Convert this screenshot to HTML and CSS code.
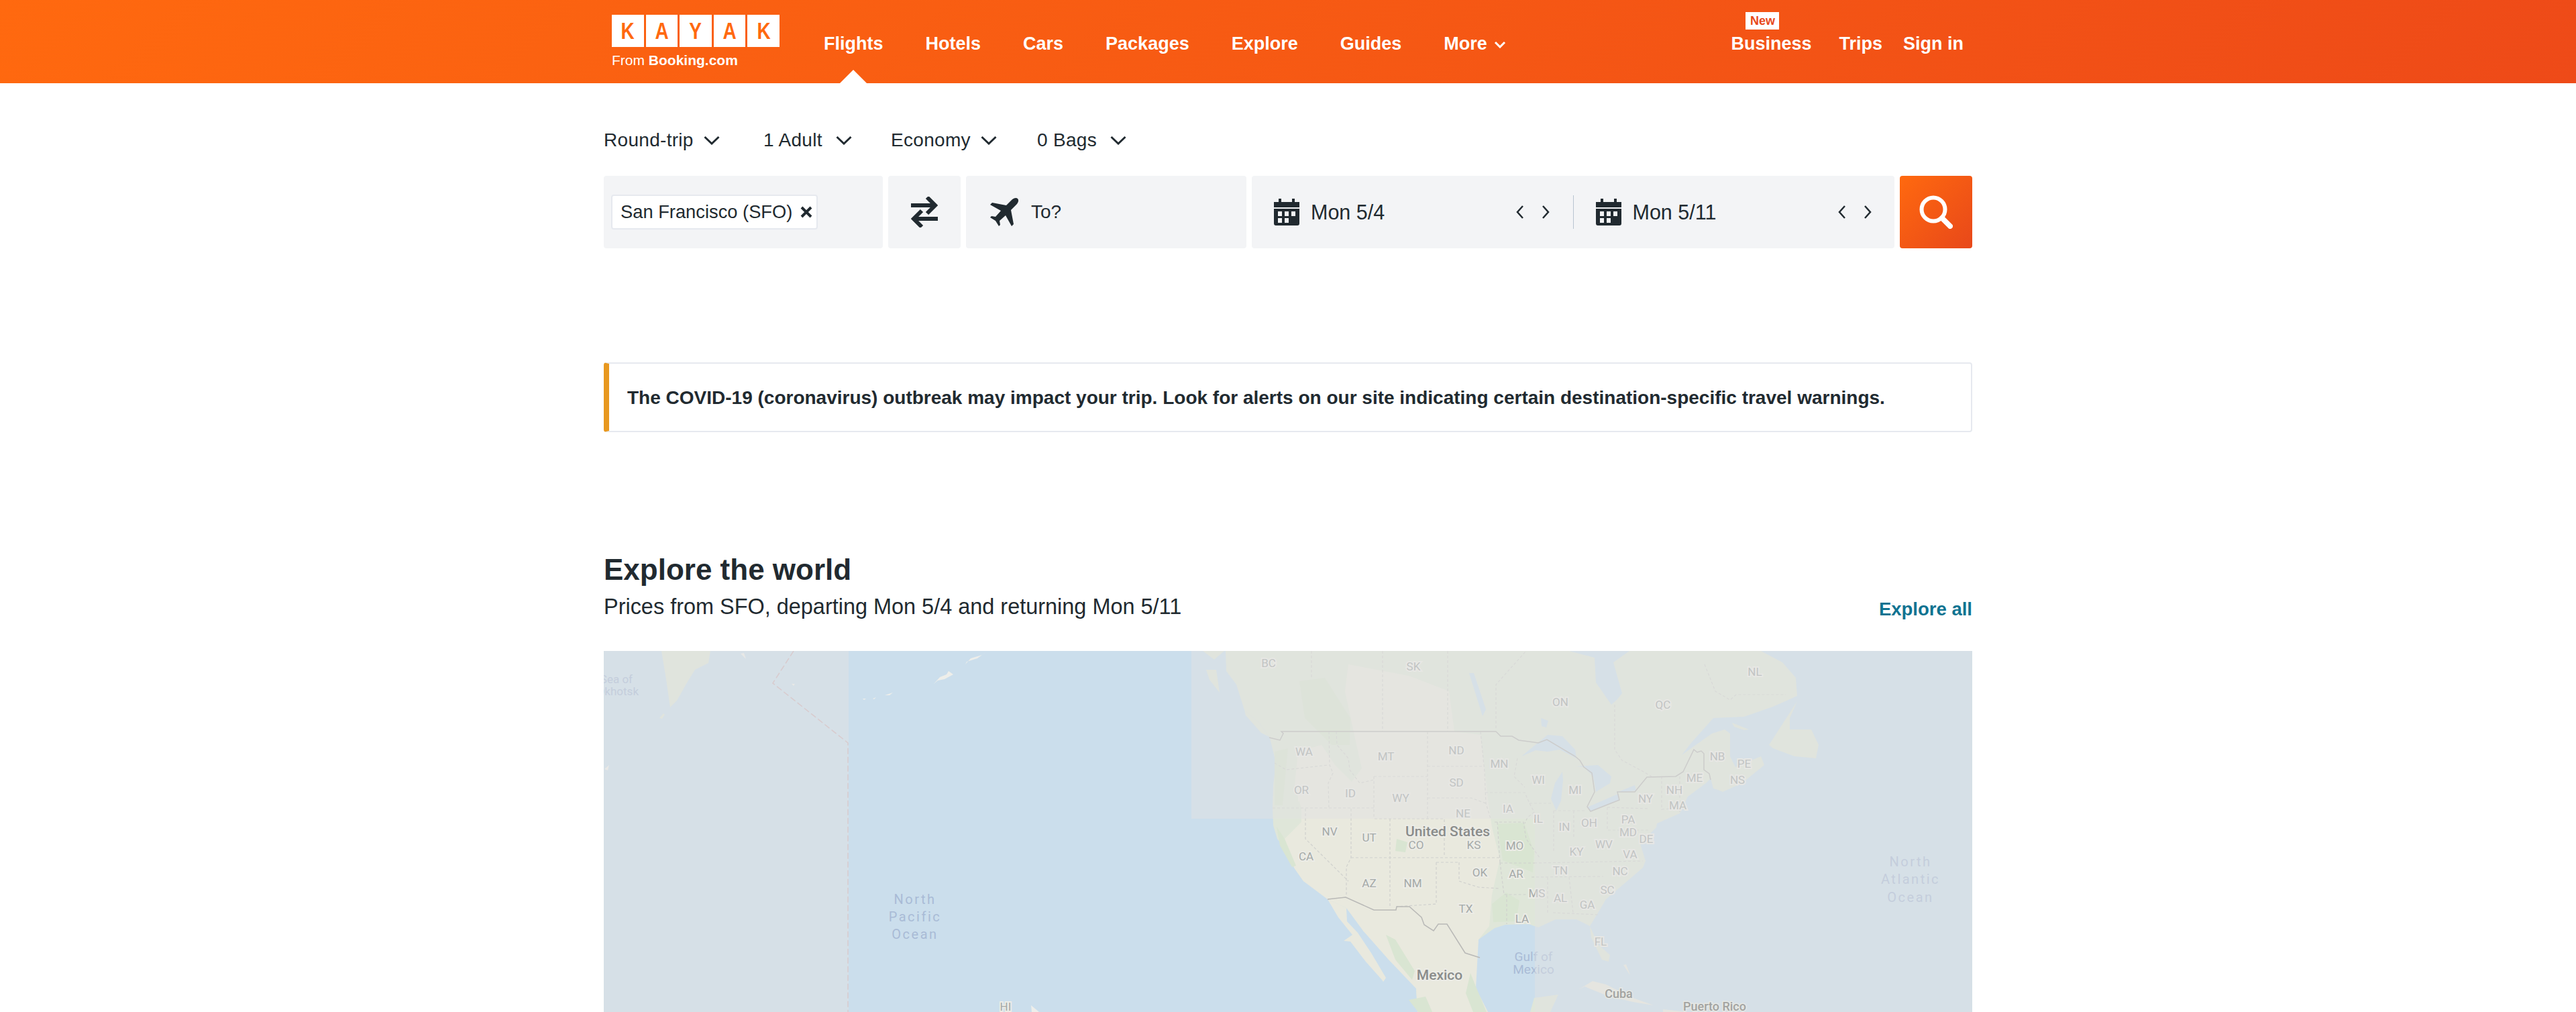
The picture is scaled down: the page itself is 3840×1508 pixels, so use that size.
FILE: index.html
```html
<!DOCTYPE html>
<html lang="en">
<head>
  <meta charset="UTF-8" />
  <title>KAYAK Flights</title>
  <link rel="stylesheet" href="styles.css">
</head>
<body>
  <header class="topbar">
    <div class="topbar-inner">
      <a class="logo">
        <div class="logo-tiles">
          <span class="tile"><b>K</b></span>
          <span class="tile"><b>A</b></span>
          <span class="tile"><b>Y</b></span>
          <span class="tile"><b>A</b></span>
          <span class="tile"><b>K</b></span>
        </div>
        <div class="logo-from">From <b>Booking.com</b></div>
      </a>
      <nav class="nav-main">
        <a class="nav-link active">Flights</a>
        <a class="nav-link">Hotels</a>
        <a class="nav-link">Cars</a>
        <a class="nav-link">Packages</a>
        <a class="nav-link">Explore</a>
        <a class="nav-link">Guides</a>
        <a class="nav-link">More<svg class="nav-chev" viewBox="0 0 18 11"><path d="M2 2l7 7 7-7" /></svg></a>
      </nav>
      <nav class="nav-right">
        <a class="nav-link nav-business">Business<span class="badge-new">New</span></a>
        <a class="nav-link nav-trips">Trips</a>
        <a class="nav-link">Sign in</a>
      </nav>
    </div>
  </header>

  <main class="page">
    <div class="options">
      <button class="option option-trip">Round-trip<svg class="chev" viewBox="0 0 24 14"><path d="M1.5 2L12 12 22.5 2" /></svg></button>
      <button class="option option-adult">1 Adult<svg class="chev" viewBox="0 0 24 14"><path d="M1.5 2L12 12 22.5 2" /></svg></button>
      <button class="option option-cabin">Economy<svg class="chev" viewBox="0 0 24 14"><path d="M1.5 2L12 12 22.5 2" /></svg></button>
      <button class="option option-bags">0 Bags<svg class="chev" viewBox="0 0 24 14"><path d="M1.5 2L12 12 22.5 2" /></svg></button>
    </div>

    <div class="search">
      <div class="field field-origin">
        <span class="chip">San Francisco (SFO)<svg class="chip-x" viewBox="0 0 18 18"><path d="M2 2l14 14M16 2L2 16" /></svg></span>
      </div>
      <div class="field field-swap">
        <svg class="swap-icon" viewBox="0 0 46 46">
          <path d="M3 13h35M27 1l12 12-12 12" />
          <path d="M43 33H8M19 21L7 33l12 12" />
        </svg>
      </div>
      <div class="field field-dest">
        <svg class="plane-icon" viewBox="0 0 44 44">
          <path d="M43 2c-2-2-6-1-9 2l-8 8L5 8 2 11l16 9-8 9-6-1-2 2 8 5 5 8 2-2-1-6 9-8 9 16 3-3-4-21 8-8c3-3 4-7 2-9z" />
        </svg>
        <span class="dest-text">To?</span>
      </div>
      <div class="field field-dates">
        <div class="date date-depart">
          <svg class="cal-icon" viewBox="0 0 38 40">
            <path d="M7 0h4v5H7zM27 0h4v5h-4zM0 5h38v8H0zM0 15h38v22a3 3 0 0 1-3 3H3a3 3 0 0 1-3-3zM6 19v7h6v-7zm10 0v7h6v-7zm10 0v7h6v-7zM6 29v7h6v-7zm10 0v7h6v-7z" fill-rule="evenodd" />
          </svg>
          <span class="date-text">Mon 5/4</span>
          <svg class="step-icon" viewBox="0 0 12 20"><path d="M10 1L2 10l8 9" /></svg>
          <svg class="step-icon" viewBox="0 0 12 20"><path d="M2 1l8 9-8 9" /></svg>
        </div>
        <div class="date-sep"></div>
        <div class="date date-return">
          <svg class="cal-icon" viewBox="0 0 38 40">
            <path d="M7 0h4v5H7zM27 0h4v5h-4zM0 5h38v8H0zM0 15h38v22a3 3 0 0 1-3 3H3a3 3 0 0 1-3-3zM6 19v7h6v-7zm10 0v7h6v-7zm10 0v7h6v-7zM6 29v7h6v-7zm10 0v7h6v-7z" fill-rule="evenodd" />
          </svg>
          <span class="date-text">Mon 5/11</span>
          <svg class="step-icon" viewBox="0 0 12 20"><path d="M10 1L2 10l8 9" /></svg>
          <svg class="step-icon" viewBox="0 0 12 20"><path d="M2 1l8 9-8 9" /></svg>
        </div>
      </div>
      <button class="search-btn">
        <svg class="search-icon" viewBox="0 0 50 50">
          <circle cx="21" cy="21" r="17.5" />
          <path class="handle" d="M34 34l12 12" />
        </svg>
      </button>
    </div>

    <div class="alert">The COVID-19 (coronavirus) outbreak may impact your trip. Look for alerts on our site indicating certain destination-specific travel warnings.</div>

    <section class="explore">
      <div class="explore-head">
        <div>
          <h2 class="explore-title">Explore the world</h2>
          <p class="explore-sub">Prices from SFO, departing Mon 5/4 and returning Mon 5/11</p>
        </div>
        <a class="explore-all">Explore all</a>
      </div>

      <div class="map">
        <svg class="map-svg" viewBox="0 0 2040 538" width="2040" height="538">
          <!-- far side of the pacific -->
          <path class="land" d="M86 0L159 0 156 18 136 28 123 49 109 74 99 84 93 42Z" />
          <path class="land" d="M83 100L89 93 91 95 87 101Z" />
          <path class="isle" d="M204 4L209 3 212 12ZM280 49L285 49 283 52ZM1 176L8 170 6 178Z" />
          <path class="isle" d="M539 20L547 11 564 6 572 0 557 11 541 16Z" />
          <path class="isle" d="M492 49L501 39 511 35 514 30 521 35 508 42 498 44Z" />
          <path class="isle" d="M419 66L431 62 426 66ZM401 71L406 69 403 72ZM386 71L391 71 388 73ZM637 528L649 538 638 538Z" />
          <path class="dateline" d="M283 0L252 48 364 137V538" />

          <!-- north america -->
          <path class="land" d="M927 0L928 30 943 50 955 88 977 107 992 128 993 130 1002 167 998 200 997 233 998 260 1004 280 1023 303 1029 323 1043 343 1065 353 1079 370 1107 383 1126 393 1132 417 1154 437 1170 460 1194 480 1211 503 1213 538 1318 538 1300 503 1300 463 1304 430 1328 413 1344 408 1379 407 1393 412 1419 400 1450 400 1470 410 1482 437 1500 453 1498 463 1488 460 1472 427 1470 410 1484 387 1494 370 1549 323 1553 313 1545 287 1569 263 1570 257 1604 242 1616 217 1643 197 1650 190 1654 205 1661 207 1668 210 1697 197 1730 170 1725 157 1687 173 1679 157 1679 123 1671 117 1652 123 1607 155 1621 137 1654 100 1700 98 1743 83 1779 67 1777 40 1757 17 1725 0 1529 0 1505 17 1518 63 1511 72 1502 80 1479 47 1477 10 1439 0Z" />
          <path class="land-warm" d="M1110 20L1200 37 1260 60 1268 120 1307 125 1318 220 1324 263 1336 310 1324 363 1320 410 1304 430 1300 503 1318 538 1213 538 1211 503 1170 460 1132 417 1107 383 1079 370 1043 343 1029 323 1023 303 1015 280 1040 255 1040 235 1030 200 1035 150 1070 140 1090 170 1115 195 1130 175 1120 130 1105 60Z" />
          <path class="land-dark" d="M1332 258L1372 256 1387 300 1385 330 1340 312ZM1324 377L1345 360 1365 372 1360 403 1326 404ZM1037 45L1075 40 1113 100 1112 140 1085 140 1045 100Z" />
          <path class="land-dark" d="M1166 423L1180 430 1209 477 1205 490 1180 460ZM1182 280L1198 285 1195 300 1180 298ZM1200 520L1225 515 1235 538 1214 538ZM1292 480L1300 500 1316 538 1296 538 1285 510Z" />
          <path class="land-dark" d="M1003 262L1015 280 1032 320 1026 322 1008 290ZM1000 150L1020 145 1012 230 1000 230Z" />
          <path class="land-warm" d="M1079 370L1095 397 1116 423 1103 432 1113 433 1136 463 1160 490 1162 493 1166 487 1144 450 1124 420 1108 403 1107 383Z" />
          <path class="land-warm" d="M1035 160L1060 170 1050 210 1035 225Z" />
          <path class="land" d="M898 28L913 28 918 62 903 43ZM893 0L910 13 925 0ZM955 88L977 107 992 128 980 122 957 96Z" />
          <path class="land" d="M1779 75L1737 140 1743 145 1775 157 1807 160 1811 140 1800 117 1768 117 1768 100Z" />
          <path class="land" d="M1682 107L1707 117 1700 118 1685 113Z" />
          <path class="land-warm" d="M1452 505L1474 492 1494 497 1534 517 1565 528 1534 523 1494 513 1462 500Z" />
          <path class="land-warm" d="M1520 468L1524 467 1530 483ZM1579 534L1614 538 1579 538Z" />
          <path class="land" d="M1381 538L1387 517 1423 512 1411 538Z" />
          <path class="lake" d="M1368 157L1407 125 1429 127 1448 147 1450 160 1425 147 1407 150 1389 148Z" />
          <path class="lake" d="M1429 180L1418 197 1412 220 1420 238 1427 223 1430 193Z" />
          <path class="lake" d="M1450 172L1482 170 1502 187 1500 197 1479 210 1475 187 1461 173Z" />
          <path class="lake" d="M1466 233L1512 213 1513 222 1471 239ZM1505 213L1537 200 1539 208 1511 211Z" />
          <path class="lake" d="M1290 33L1297 33 1315 87 1310 97ZM1397 100L1408 104 1405 114 1398 112Z" />

          <path class="border-state" d="M1161 0V120M1055 0V40M1258 0V120M1330 115V50L1375 0M1507 80V147L1518 163 1550 180 1562 187M1641 20L1657 60 1679 73 1688 65H1762" />
          <path class="border-state" d="M1000 167L1017 177 1080 170M1081 120L1082 170 1087 182 1080 197 1081 233M1092 120L1093 140 1110 160 1112 177 1127 197 1148 192M1148 187H1228M1148 187V250M1228 120V250M1228 172H1313M1228 219H1293L1315 227M1307 120L1313 180 1315 227 1322 250M997 234H1148M1046 235V280L1110 343M1114 235V308L1107 322V363M1172 250V380M1149 250H1253V307M1114 308H1336M1328 255H1371L1375 280 1395 308M1332 255L1336 315M1241 315H1275M1241 315V377L1182 381M1275 315V343L1304 352 1336 354M1336 316H1387M1336 315L1342 363H1375M1346 363V407M1387 316L1549 313M1383 337L1490 336M1407 337V390M1439 337L1445 390M1415 390L1482 393M1314 211H1373L1380 227 1387 240 1377 248 1373 257M1380 227H1414M1416 238V300M1446 238V277M1416 238H1464M1496 233L1557 235M1496 233V267H1557M1577 187V237M1604 187V242M1577 236L1604 234M1362 160L1357 187 1373 203" />
          <path class="border-country" d="M992 129L1008 133 1013 123 1010 120H1330L1337 127H1354L1364 133 1379 135 1393 137 1406 132 1448 157 1455 163 1461 173 1473 182 1477 210 1466 232 1471 239 1514 222 1511 210H1537L1555 188 1598 187 1609 180 1625 147 1630 151 1636 149 1640 153V177L1648 183 1650 192" />
          <path class="border-country" d="M1079 370L1106 367 1148 386H1181L1182 381H1201L1219 397 1223 408 1237 417 1244 407 1257 407 1284 450 1306 457" />

          <text class="lbl-ocean" text-anchor="end" x="43" y="48">Sea of</text>
          <text class="lbl-ocean" text-anchor="end" x="52" y="66">Okhotsk</text>
          <text class="lbl-ocean big" x="464" y="377">North</text>
          <text class="lbl-ocean big" x="464" y="403">Pacific</text>
          <text class="lbl-ocean big" x="464" y="429">Ocean</text>
          <text class="lbl-ocean big" x="1948" y="321">North</text>
          <text class="lbl-ocean big" x="1948" y="347">Atlantic</text>
          <text class="lbl-ocean big" x="1948" y="374">Ocean</text>
          <text class="lbl-gulf" x="1386" y="462">Gulf of</text>
          <text class="lbl-gulf" x="1386" y="481">Mexico</text>

          <g class="lbl-state">
            <text x="599" y="536">HI</text>
            <text x="991" y="24">BC</text><text x="1207" y="29">SK</text><text x="1426" y="82">ON</text>
            <text x="1579" y="86">QC</text><text x="1716" y="37">NL</text><text x="1044" y="156">WA</text>
            <text x="1166" y="163">MT</text><text x="1271" y="154">ND</text><text x="1335" y="174">MN</text>
            <text x="1660" y="163">NB</text><text x="1700" y="174">PE</text><text x="1393" y="198">WI</text>
            <text x="1271" y="202">SD</text><text x="1626" y="195">ME</text><text x="1690" y="198">NS</text>
            <text x="1040" y="213">OR</text><text x="1113" y="218">ID</text><text x="1188" y="225">WY</text>
            <text x="1448" y="213">MI</text><text x="1596" y="213">NH</text><text x="1553" y="226">NY</text>
            <text x="1601" y="236">MA</text><text x="1281" y="248">NE</text><text x="1348" y="241">IA</text>
            <text x="1393" y="256">IL</text><text x="1469" y="262">OH</text><text x="1527" y="257">PA</text>
            <text x="1432" y="268">IN</text><text x="1527" y="276">MD</text><text x="1554" y="286">DE</text>
            <text x="1082" y="275">NV</text><text x="1141" y="284">UT</text><text x="1211" y="295">CO</text>
            <text x="1297" y="295">KS</text><text x="1358" y="296">MO</text><text x="1491" y="294">WV</text>
            <text x="1450" y="305">KY</text><text x="1530" y="309">VA</text><text x="1047" y="312">CA</text>
            <text x="1306" y="336">OK</text><text x="1360" y="338">AR</text><text x="1426" y="333">TN</text>
            <text x="1515" y="334">NC</text><text x="1141" y="352">AZ</text><text x="1206" y="352">NM</text>
            <text x="1391" y="367">MS</text><text x="1426" y="374">AL</text><text x="1496" y="362">SC</text>
            <text x="1466" y="384">GA</text><text x="1285" y="390">TX</text><text x="1369" y="405">LA</text>
            <text x="1486" y="439">FL</text>
          </g>
          <text class="lbl-country" x="1258" y="276">United States</text>
          <text class="lbl-country" x="1246" y="490">Mexico</text>

          <!-- tiles still fading in, they sit over whatever is below -->
          <rect class="tile-fade" x="0" y="0" width="365" height="538" />
          <rect class="tile-fade" x="876" y="0" width="1164" height="250" />
          <rect class="tile-fade" x="1388" y="250" width="652" height="288" />

          <text class="lbl-place" x="1513" y="517">Cuba</text>
          <text class="lbl-place" x="1656" y="536">Puerto Rico</text>
        </svg>
      </div>
    </section>
  </main>
</body>
</html>
```

FILE: styles.css
```css
* {
  box-sizing: border-box;
}

html, body {
  height: 100%;
}

body {
  margin: 0;
  font-family: "Liberation Sans", Arial, sans-serif;
  font-size: 28px;
  color: #212a30;
  background: #fff;
  overflow: hidden;
}

svg {
  display: block;
  flex: none;
}

/* header */
.topbar {
  height: 124px;
  background: linear-gradient(135deg, #ff690f, #ee4a18);
}

.topbar-inner {
  width: 2040px;
  height: 100%;
  margin: 0 auto;
  padding: 0 13px 0 12px;
  display: flex;
}

.logo {
  width: 250px;
  padding-top: 22px;
  color: #fff;
}

.logo-tiles {
  display: flex;
  gap: 3px;
}

.tile {
  width: 48px;
  height: 48px;
  background: #fff;
  color: #ff690f;
  font-size: 35px;
  line-height: 48px;
  text-align: center;
}

.tile b {
  display: inline-block;
  transform: scaleX(.8);
}

.logo-from {
  margin-top: 9px;
  font-size: 21px;
  line-height: 22px;
  white-space: nowrap;
}

.nav-main {
  margin-left: 66px;
  display: flex;
  gap: 63px;
}

.nav-right {
  margin-left: auto;
  display: flex;
}

.nav-link {
  position: relative;
  display: flex;
  align-items: center;
  height: 100%;
  padding-top: 6px;
  color: #fff;
  font-size: 27px;
  font-weight: bold;
  white-space: nowrap;
}

.nav-chev {
  width: 18px;
  height: 11px;
  margin-left: 10px;
  margin-top: 3px;
  fill: none;
  stroke: #fff;
  stroke-width: 3;
}

.active::after {
  content: "";
  position: absolute;
  left: 50%;
  bottom: 0;
  margin-left: -20px;
  border-left: 20px solid transparent;
  border-right: 20px solid transparent;
  border-bottom: 20px solid #fff;
}

.nav-business {
  margin-right: 41px;
}

.nav-trips {
  margin-right: 31px;
}

.badge-new {
  position: absolute;
  top: 18px;
  left: 22px;
  width: 50px;
  height: 26px;
  background: #fff;
  color: #e8481a;
  font-size: 18px;
  line-height: 26px;
  text-align: center;
}

/* search form */
.page {
  width: 2040px;
  margin: 0 auto;
}

.options {
  display: flex;
  height: 138px;
  align-items: flex-start;
}

.option {
  display: flex;
  align-items: center;
  margin-top: 67px;
  padding: 0;
  border: 0;
  background: none;
  color: #212a30;
  font: 28px/36px "Liberation Sans", Arial, sans-serif;
  letter-spacing: .3px;
  white-space: nowrap;
}

.option-trip {
  width: 238px;
}

.option-adult {
  width: 190px;
}

.option-cabin {
  width: 218px;
}

.chev {
  width: 24px;
  height: 14px;
  margin-left: 15px;
  fill: none;
  stroke: #212a30;
  stroke-width: 3;
}

.option-adult .chev,
.option-bags .chev {
  margin-left: 20px;
}

.search {
  display: flex;
  gap: 8px;
  height: 108px;
}

.field {
  display: flex;
  align-items: center;
  background: #f3f4f6;
  border-radius: 4px;
}

.field-origin {
  width: 416px;
  padding-left: 11px;
}

.chip {
  display: flex;
  align-items: center;
  width: 308px;
  height: 52px;
  padding-left: 12px;
  background: #fff;
  border: 2px solid #e6e9ef;
  border-radius: 4px;
  font-size: 27.3px;
  white-space: nowrap;
}

.chip-x {
  width: 18px;
  height: 18px;
  margin-left: 12px;
  fill: none;
  stroke: #212a30;
  stroke-width: 4;
}

.field-swap {
  width: 108px;
  justify-content: center;
}

.swap-icon {
  width: 46px;
  height: 46px;
  fill: none;
  stroke: #212a30;
  stroke-width: 6;
}

.field-dest {
  width: 418px;
  padding-left: 34px;
}

.plane-icon {
  width: 44px;
  height: 44px;
  fill: #212a30;
}

.dest-text {
  margin-left: 19px;
}

.field-dates {
  width: 958px;
}

.date {
  display: flex;
  align-items: center;
  width: 479px;
  padding-left: 33px;
}

.date-text {
  width: 306px;
  margin-left: 17px;
  font-size: 30.5px;
}

.date-sep {
  width: 1px;
  height: 50px;
  background: #b8c4d0;
}

.cal-icon {
  width: 38px;
  height: 40px;
  fill: #212a30;
}

.step-icon {
  width: 12px;
  height: 20px;
  margin-right: 26px;
  fill: none;
  stroke: #212a30;
  stroke-width: 2.5;
}

.search-btn {
  display: flex;
  align-items: center;
  justify-content: center;
  width: 108px;
  padding: 0;
  border: 0;
  border-radius: 4px;
  background: linear-gradient(135deg, #ff690f, #e8481a);
}

.search-icon {
  width: 50px;
  height: 50px;
  fill: none;
  stroke: #fff;
  stroke-width: 6;
}

.search-icon .handle {
  stroke-width: 8;
  stroke-linecap: round;
}

/* alert */
.alert {
  height: 104px;
  margin-top: 170px;
  padding: 2px 0 0 27px;
  display: flex;
  align-items: center;
  border: 2px solid #e6e9ef;
  border-left: 8px solid #e8981f;
  border-radius: 4px;
  font-weight: bold;
}

/* explore */
.explore {
  margin-top: 179px;
}

.explore-head {
  display: flex;
  justify-content: space-between;
  align-items: flex-end;
  height: 147px;
}

.explore-head > div {
  align-self: flex-start;
}

.explore-title {
  margin: 0;
  font-size: 44px;
  line-height: 52px;
}

.explore-sub {
  margin: 10px 0 0;
  font-size: 32.45px;
  line-height: 38px;
}

.explore-all {
  margin-bottom: 46px;
  color: #0f7391;
  font-size: 27.5px;
  font-weight: bold;
}

/* map */
.map {
  height: 538px;
  background: #cbdeec;
  overflow: hidden;
}

.map-svg {
  font-family: Roboto, "Liberation Sans", sans-serif;
}

.tile-fade {
  fill: rgba(226, 226, 226, .48);
}

.land {
  fill: #dfe6d9;
}

.land-warm {
  fill: #e9e9de;
}

.land-dark {
  fill: #d9e5d2;
}

.isle {
  fill: #eeeeea;
}

.lake {
  fill: #cbdeec;
}

.border-state {
  fill: none;
  stroke: #d0d1ce;
  stroke-width: 1.2;
  stroke-dasharray: 4 3;
}

.border-country {
  fill: none;
  stroke: #b9b9b7;
  stroke-width: 1.5;
}

.dateline {
  fill: none;
  stroke: #d0b6bb;
  stroke-width: 1.5;
  stroke-dasharray: 9 4;
}

.lbl-state text {
  font-size: 17px;
  fill: #a4a9a8;
  text-anchor: middle;
  stroke: #ecece6;
  stroke-width: 4px;
  paint-order: stroke;
}

.lbl-country {
  font-size: 21px;
  font-weight: 500;
  fill: #8a8c8b;
  text-anchor: middle;
  stroke: #ecece6;
  stroke-width: 4px;
  paint-order: stroke;
}

.lbl-place {
  font-size: 18px;
  font-weight: 500;
  fill: #a2a3a1;
  text-anchor: middle;
  stroke: #e6e8e4;
  stroke-width: 3px;
  paint-order: stroke;
}

.lbl-ocean {
  font-size: 17px;
  fill: #a9bbd6;
}

.lbl-ocean.big {
  font-size: 20px;
  letter-spacing: 2.5px;
  text-anchor: middle;
}

.lbl-gulf {
  font-size: 19px;
  fill: #a9bbd6;
  text-anchor: middle;
}
```
